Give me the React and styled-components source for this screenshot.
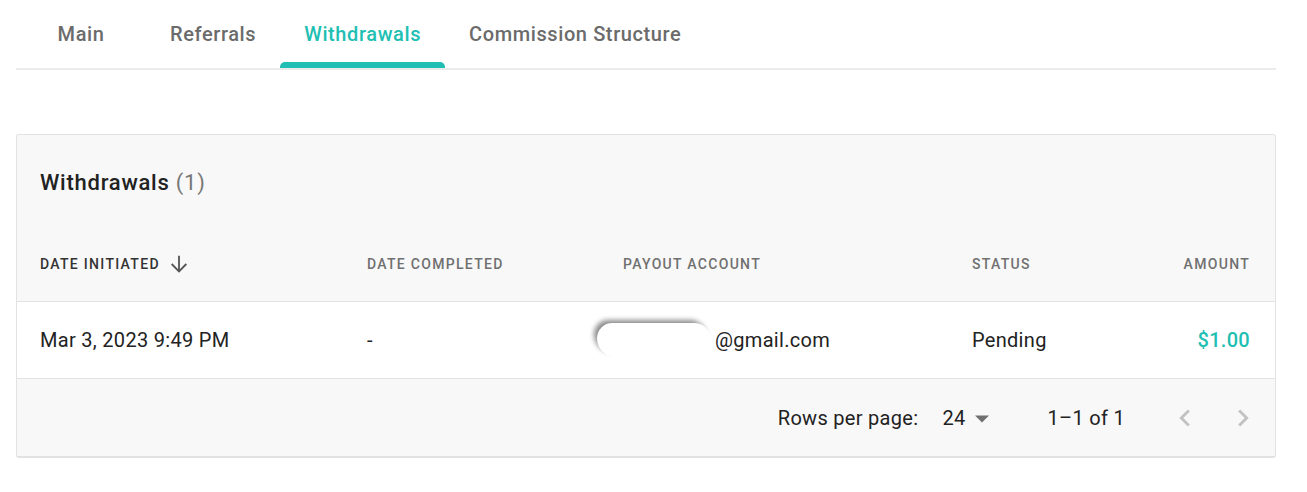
import React from "react";
import styled, { createGlobalStyle } from "styled-components";

const Global = createGlobalStyle`
  html, body { margin: 0; padding: 0; background: #fff; }
  body { font-family: Roboto, "Noto Sans", Arial, sans-serif; color: #222; }
`;

const TEAL = "#21bfb3";

const Page = styled.div`
  width: 1260px;
  padding: 0 0 0 16px;
`;

const TabBar = styled.nav`
  display: flex;
  height: 68px;
  border-bottom: 2px solid #ebebeb;
`;

const Tab = styled.button`
  position: relative;
  min-width: 130px;
  padding: 0 24px;
  height: 68px;
  border: none;
  background: none;
  font-family: Roboto, sans-serif;
  font-size: 20px;
  font-weight: 500;
  letter-spacing: 0.6px;
  color: ${(p) => (p.$active ? TEAL : "#6b6b6b")};
  cursor: pointer;
  display: flex;
  align-items: center;
  justify-content: center;
  &::after {
    content: "";
    display: ${(p) => (p.$active ? "block" : "none")};
    position: absolute;
    left: 0;
    right: 0;
    bottom: 0;
    height: 6px;
    border-radius: 5px 5px 0 0;
    background: ${TEAL};
  }
`;

const Card = styled.section`
  margin-top: 64px;
  border: 1px solid #e2e2e2;
  border-bottom-width: 2px;
  border-radius: 3px;
  background: #f8f8f8;
  overflow: hidden;
`;

const TitleBar = styled.div`
  padding: 35px 24px 33px 23px;
  height: 24px;
  display: flex;
  align-items: center;
`;

const Title = styled.h2`
  margin: 0;
  font-size: 22px;
  font-weight: 500;
  color: #222;
  letter-spacing: 0.75px;
`;

const Count = styled.span`
  color: #777;
  font-weight: 400;
`;

const Row = styled.div`
  display: grid;
  grid-template-columns: 327px 256px 349px 1fr auto;
  align-items: center;
  padding: 0 25px 0 23px;
  height: ${(p) => p.$h}px;
  border-bottom: 1px solid #e3e3e3;
  background: ${(p) => (p.$body ? "#fff" : "transparent")};
`;

const HeadCell = styled.div`
  font-size: 14px;
  font-weight: 500;
  letter-spacing: 1.3px;
  text-transform: uppercase;
  color: ${(p) => (p.$sorted ? "#333" : "#707070")};
  display: flex;
  align-items: center;
  gap: 8px;
  justify-content: ${(p) => (p.$right ? "flex-end" : "flex-start")};
`;

const Cell = styled.div`
  font-size: 20px;
  letter-spacing: 0.3px;
  color: ${(p) => (p.$amount ? TEAL : "#222")};
  font-weight: ${(p) => (p.$amount ? 500 : 400)};
  display: flex;
  align-items: center;
  justify-content: ${(p) => (p.$right ? "flex-end" : "flex-start")};
`;

const Redact = styled.span`
  display: inline-block;
  width: 114px;
  height: 34px;
  margin-left: -26px;
  margin-right: 4px;
  border-radius: 18px 20px 14px 22px;
  background: #fff;
  box-shadow: -4px -4px 5px -1px rgba(0, 0, 0, 0.45);
`;

const Footer = styled.div`
  height: 77px;
  display: flex;
  align-items: center;
  justify-content: flex-end;
  padding-right: 3px;
  font-size: 20px;
  letter-spacing: 0.3px;
  color: #222;
`;

const RowsLabel = styled.span`
  margin-right: 24px;
`;

const Select = styled.span`
  display: inline-flex;
  align-items: center;
  gap: 5px;
  margin-right: 53px;
`;

const Range = styled.span`
  margin-right: 31px;
`;

const IconBtn = styled.button`
  width: 58px;
  height: 48px;
  border: none;
  background: none;
  padding: 0;
  display: flex;
  align-items: center;
  justify-content: center;
  color: #c2c2c2;
`;

const SortArrow = () => (
  <svg width="22" height="22" viewBox="0 0 24 24" fill="none" stroke="#555" strokeWidth="2">
    <path d="M12 3v17" />
    <path d="M4 12l8 8 8-8" />
  </svg>
);

const DropArrow = () => (
  <svg width="24" height="24" viewBox="0 0 24 24" fill="#707070">
    <path d="M5 9.5l7 7 7-7z" />
  </svg>
);

const Chevron = ({ dir }) => (
  <svg width="34" height="34" viewBox="0 0 24 24" fill="currentColor">
    {dir === "left" ? (
      <path d="M15.41 7.41L14 6l-6 6 6 6 1.41-1.41L10.83 12z" />
    ) : (
      <path d="M10 6L8.59 7.41 13.17 12l-4.58 4.59L10 18l6-6z" />
    )}
  </svg>
);

export default function App() {
  const tabs = ["Main", "Referrals", "Withdrawals", "Commission Structure"];
  return (
    <Page>
      <Global />
      <TabBar>
        {tabs.map((t) => (
          <Tab key={t} $active={t === "Withdrawals"}>
            {t}
          </Tab>
        ))}
      </TabBar>
      <Card>
        <TitleBar>
          <Title>
            Withdrawals <Count>(1)</Count>
          </Title>
        </TitleBar>
        <Row $h={74}>
          <HeadCell $sorted>
            Date Initiated <SortArrow />
          </HeadCell>
          <HeadCell>Date Completed</HeadCell>
          <HeadCell>Payout Account</HeadCell>
          <HeadCell>Status</HeadCell>
          <HeadCell $right>Amount</HeadCell>
        </Row>
        <Row $h={76} $body>
          <Cell>Mar 3, 2023 9:49 PM</Cell>
          <Cell>-</Cell>
          <Cell>
            <Redact />@gmail.com
          </Cell>
          <Cell>Pending</Cell>
          <Cell $amount $right>$1.00</Cell>
        </Row>
        <Footer>
          <RowsLabel>Rows per page:</RowsLabel>
          <Select>
            24 <DropArrow />
          </Select>
          <Range>1–1 of 1</Range>
          <IconBtn aria-label="previous">
            <Chevron dir="left" />
          </IconBtn>
          <IconBtn aria-label="next">
            <Chevron dir="right" />
          </IconBtn>
        </Footer>
      </Card>
    </Page>
  );
}
